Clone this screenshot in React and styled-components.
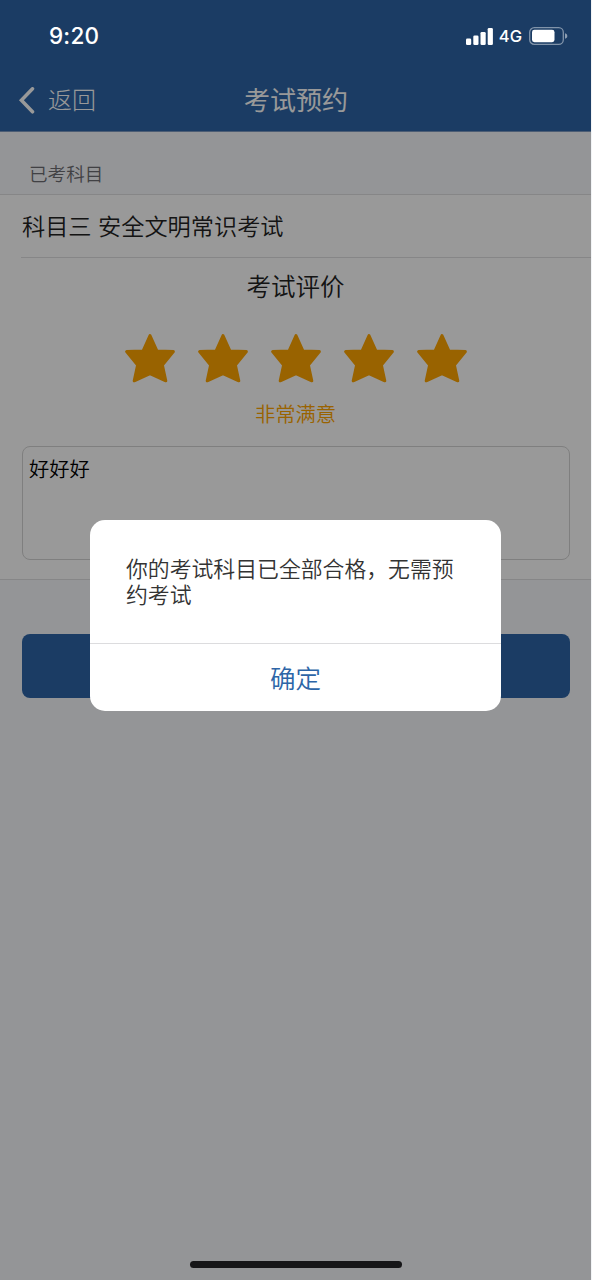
import styled, { createGlobalStyle } from 'styled-components'

const GlobalStyle = createGlobalStyle`
  * {
    box-sizing: border-box;
  }
  body {
    margin: 0;
    background: #f2f4f6;
    font-family: "Liberation Sans", "Noto Sans CJK SC", sans-serif;
    font-weight: 350;
  }
`

const Screen = styled.div`
  position: relative;
  width: 591px;
  height: 1280px;
  overflow: hidden;
  background: #f7f9fc;
`

const StatusBar = styled.div`
  position: absolute;
  z-index: 20;
  top: 0;
  left: 0;
  width: 100%;
  height: 72px;
  padding: 0 23px 0 49px;
  display: flex;
  align-items: center;
  justify-content: space-between;
  color: #fff;
  font-family: Inter, sans-serif;
`

const Time = styled.span`
  font-size: 22.5px;
  font-weight: 500;
  line-height: 28px;
  letter-spacing: 0.2px;
`

const StatusIcons = styled.div`
  display: flex;
  align-items: center;
`

const Network = styled.span`
  margin: 0 7px 0 6px;
  font-size: 16.5px;
  font-weight: 500;
  line-height: 20px;
`

const NavBar = styled.header`
  display: grid;
  grid-template-columns: 1fr auto 1fr;
  align-items: center;
  height: 132px;
  padding: 71px 17px 0 18px;
  background: #2d65a7;
  border-bottom: 1px solid #7f9cc2;
  color: #fff;
`

const BackButton = styled.div`
  display: flex;
  align-items: center;
  gap: 12px;
  font-size: 24px;
  font-weight: 300;
  line-height: 30px;
`

const NavTitle = styled.h1`
  margin: 0;
  font-size: 26px;
  font-weight: 400;
  line-height: 32px;
`

const SectionLabel = styled.div`
  height: 62px;
  padding: 29px 29px 0;
  color: #6d6d72;
  font-size: 18.6px;
  line-height: 28px;
`

const Panel = styled.section`
  height: 386px;
  background: #fff;
  border-top: 1px solid #e0e0e2;
  border-bottom: 1px solid #e0e0e2;
`

const SubjectRow = styled.div`
  height: 63px;
  margin-left: 21px;
  padding: 0 0 2px 1px;
  display: flex;
  align-items: center;
  border-bottom: 1px solid #e0e0e2;
  color: #222;
  font-size: 23.2px;
`

const RateTitle = styled.div`
  margin-top: 12px;
  color: #222;
  font-size: 24.5px;
  line-height: 36px;
  text-align: center;
`

const Stars = styled.div`
  display: flex;
  justify-content: center;
  gap: 21px;
  margin-top: 27px;
`

const RateText = styled.div`
  margin-top: 17px;
  color: #ffa600;
  font-size: 20.3px;
  line-height: 30px;
  text-align: center;
`

const Comment = styled.div`
  height: 114px;
  margin: 16px 21px 0 22px;
  padding: 8px 6px;
  border: 1px solid #d4d4d4;
  border-radius: 8px;
  color: #000;
  font-size: 20.3px;
  line-height: 30px;
`

const SubmitButton = styled.div`
  height: 64px;
  margin: 54px 21px 0 22px;
  border-radius: 8px;
  background: #2d65a7;
`

const Overlay = styled.div`
  position: absolute;
  z-index: 10;
  inset: 0;
  display: flex;
  align-items: flex-start;
  justify-content: center;
  padding-top: 520px;
  background: rgba(0, 0, 0, 0.4);
`

const Dialog = styled.div`
  width: 411px;
  height: 191px;
  display: flex;
  flex-direction: column;
  border-radius: 15px;
  background: #fff;
`

const Message = styled.p`
  flex: 1;
  margin: 0;
  padding: 37px 36px 0;
  color: #333;
  font-size: 21.85px;
  line-height: 25.5px;
`

const Confirm = styled.div`
  height: 68px;
  padding-bottom: 2px;
  display: flex;
  align-items: center;
  justify-content: center;
  border-top: 1px solid #dcdcde;
  color: #2d65a7;
  font-size: 25.5px;
`

const HomeIndicator = styled.div`
  position: absolute;
  z-index: 20;
  bottom: 12px;
  left: 190px;
  width: 212px;
  height: 7px;
  border-radius: 4px;
  background: #161618;
`

const Signal = () => (
  <svg width="27" height="17" viewBox="0 0 27 17" fill="#fff">
    <rect x="0" y="10.5" width="5.2" height="6.5" rx="1.3" />
    <rect x="7.3" y="7.5" width="5.2" height="9.5" rx="1.3" />
    <rect x="14.5" y="4" width="5.2" height="13" rx="1.3" />
    <rect x="21.7" y="0" width="5.2" height="17" rx="1.3" />
  </svg>
)

const Battery = () => (
  <svg width="39" height="18" viewBox="0 0 39 18">
    <rect x="0.7" y="0.7" width="33.6" height="16.6" rx="4.6" fill="none" stroke="#fff" strokeOpacity="0.45" strokeWidth="1.3" />
    <rect x="3" y="2.8" width="22.5" height="12.4" rx="2.4" fill="#fff" />
    <path d="M36 6.2c1.6.5 2.3 1.5 2.3 2.8s-.7 2.3-2.3 2.8z" fill="#fff" fillOpacity="0.5" />
  </svg>
)

const BackIcon = () => (
  <svg width="18" height="28" viewBox="0 0 18 28" fill="none" stroke="#fff" strokeWidth="3.5" strokeLinecap="round" strokeLinejoin="miter">
    <path d="M14.5 1.8L3.4 13.3l11.1 11.5" />
  </svg>
)

const Star = () => (
  <svg width="52" height="50" viewBox="0 0 52 50" fill="#ffa600" stroke="#ffa600" strokeWidth="3" strokeLinejoin="round">
    <path d="M26 2.6L33 18L49.4 18.6L38.4 32L41.8 47.8L26 40.6L10.2 47.8L13.6 32L2.6 18.6L19 18Z" />
  </svg>
)

const App = () => {
  return (
    <>
      <GlobalStyle />
      <Screen>
        <StatusBar>
          <Time>9:20</Time>
          <StatusIcons>
            <Signal />
            <Network>4G</Network>
            <Battery />
          </StatusIcons>
        </StatusBar>

        <NavBar>
          <BackButton>
            <BackIcon />
            返回
          </BackButton>
          <NavTitle>考试预约</NavTitle>
        </NavBar>

        <SectionLabel>已考科目</SectionLabel>
        <Panel>
          <SubjectRow>科目三 安全文明常识考试</SubjectRow>
          <RateTitle>考试评价</RateTitle>
          <Stars>
            {[1, 2, 3, 4, 5].map((n) => (
              <Star key={n} />
            ))}
          </Stars>
          <RateText>非常满意</RateText>
          <Comment>好好好</Comment>
        </Panel>
        <SubmitButton />

        <Overlay>
          <Dialog>
            <Message>你的考试科目已全部合格，无需预约考试</Message>
            <Confirm>确定</Confirm>
          </Dialog>
        </Overlay>
        <HomeIndicator />
      </Screen>
    </>
  )
}

export default App
